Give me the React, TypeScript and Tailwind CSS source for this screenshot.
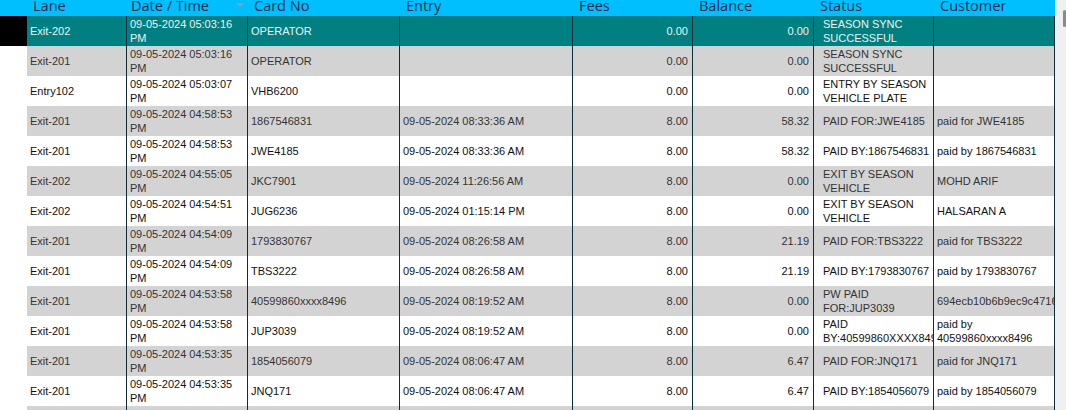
const rows: string[][] = [
  ["Exit-202", "09-05-2024 05:03:16 PM", "OPERATOR", "", "0.00", "0.00", "SEASON SYNC SUCCESSFUL", ""],
  ["Exit-201", "09-05-2024 05:03:16 PM", "OPERATOR", "", "0.00", "0.00", "SEASON SYNC SUCCESSFUL", ""],
  ["Entry102", "09-05-2024 05:03:07 PM", "VHB6200", "", "0.00", "0.00", "ENTRY BY SEASON VEHICLE PLATE", ""],
  ["Exit-201", "09-05-2024 04:58:53 PM", "1867546831", "09-05-2024 08:33:36 AM", "8.00", "58.32", "PAID FOR:JWE4185", "paid for JWE4185"],
  ["Exit-201", "09-05-2024 04:58:53 PM", "JWE4185", "09-05-2024 08:33:36 AM", "8.00", "58.32", "PAID BY:1867546831", "paid by 1867546831"],
  ["Exit-202", "09-05-2024 04:55:05 PM", "JKC7901", "09-05-2024 11:26:56 AM", "8.00", "0.00", "EXIT BY SEASON VEHICLE", "MOHD ARIF"],
  ["Exit-202", "09-05-2024 04:54:51 PM", "JUG6236", "09-05-2024 01:15:14 PM", "8.00", "0.00", "EXIT BY SEASON VEHICLE", "HALSARAN A"],
  ["Exit-201", "09-05-2024 04:54:09 PM", "1793830767", "09-05-2024 08:26:58 AM", "8.00", "21.19", "PAID FOR:TBS3222", "paid for TBS3222"],
  ["Exit-201", "09-05-2024 04:54:09 PM", "TBS3222", "09-05-2024 08:26:58 AM", "8.00", "21.19", "PAID BY:1793830767", "paid by 1793830767"],
  ["Exit-201", "09-05-2024 04:53:58 PM", "40599860xxxx8496", "09-05-2024 08:19:52 AM", "8.00", "0.00", "PW PAID FOR:JUP3039", "694ecb10b6b9ec9c4716"],
  ["Exit-201", "09-05-2024 04:53:58 PM", "JUP3039", "09-05-2024 08:19:52 AM", "8.00", "0.00", "PAID BY:40599860XXXX8496", "paid by 40599860xxxx8496"],
  ["Exit-201", "09-05-2024 04:53:35 PM", "1854056079", "09-05-2024 08:06:47 AM", "8.00", "6.47", "PAID FOR:JNQ171", "paid for JNQ171"],
  ["Exit-201", "09-05-2024 04:53:35 PM", "JNQ171", "09-05-2024 08:06:47 AM", "8.00", "6.47", "PAID BY:1854056079", "paid by 1854056079"],
  ["", "", "", "", "", "", "", ""],
];

const grid = "grid grid-cols-[99px_121px_152px_173px_120px_121px_120px_122px]";
const headers = ["Lane", "Date / Time", "Card No", "Entry", "Fees", "Balance", "Status", "Customer"];

function rowColor(i: number) {
  if (i === 0) return "bg-[#008080] text-[#f0f0f0]";
  return i % 2 === 1 ? "bg-[#d3d3d3] text-[#333333]" : "bg-white text-[#111111]";
}

export default function App() {
  return (
    <div className="h-[410px] w-[1066px] overflow-hidden bg-white font-['Liberation_Sans',Arial,sans-serif] text-[11px] leading-[14px] flex">
      <div className="w-[1055px] shrink-0 flex flex-col">
        <div className={`${grid} h-4 shrink-0 bg-[#00bfff] pl-[27px] text-[#0b2a4a] font-['Open_Sans',sans-serif] text-[14.5px] leading-4`}>
          {headers.map((h, i) => (
            <div key={h} className={`relative h-4 overflow-hidden ${i === 0 ? "pl-[6px]" : i === 1 ? "pl-[5px]" : "pl-[7px]"}`}>
              <span className="block -mt-[4px] leading-5">{h}</span>
              {i === 1 && (
                <span className="absolute right-[3px] top-[3px] h-0 w-0 border-x-[4px] border-t-[4px] border-x-transparent border-t-[#8aa0b0]" />
              )}
            </div>
          ))}
        </div>
        {rows.map((r, i) => (
          <div key={i} className="flex h-[30px] shrink-0">
            <div className={`w-[27px] shrink-0 ${i === 0 ? "bg-black" : "bg-white"}`} />
            <div className={`${grid} flex-1 min-w-0 ${rowColor(i)}`}>
              {r.map((c, j) => (
                <div
                  key={j}
                  className={`flex h-[30px] items-center overflow-hidden ${j > 0 ? "border-l border-[#0b2f3a]" : ""} ${
                    j === 7 ? "border-r" : ""
                  } ${j === 6 ? "pl-[9px]" : "pl-[3px]"} ${j === 4 || j === 5 ? "justify-end pr-[4px]" : ""}`}
                >
                  <span className={j === 1 ? "block w-[112px]" : j === 6 ? "block w-[110px] shrink-0" : j === 7 ? "block w-[118px]" : "block whitespace-nowrap"}>
                    {c}
                  </span>
                </div>
              ))}
            </div>
          </div>
        ))}
      </div>
      <div className="flex-1 bg-[#f0f0f0] relative">
        <div className="absolute left-[8px] top-[10px] h-[17px] w-[3px] rounded-sm bg-[#8a8a8a]" />
      </div>
    </div>
  );
}
